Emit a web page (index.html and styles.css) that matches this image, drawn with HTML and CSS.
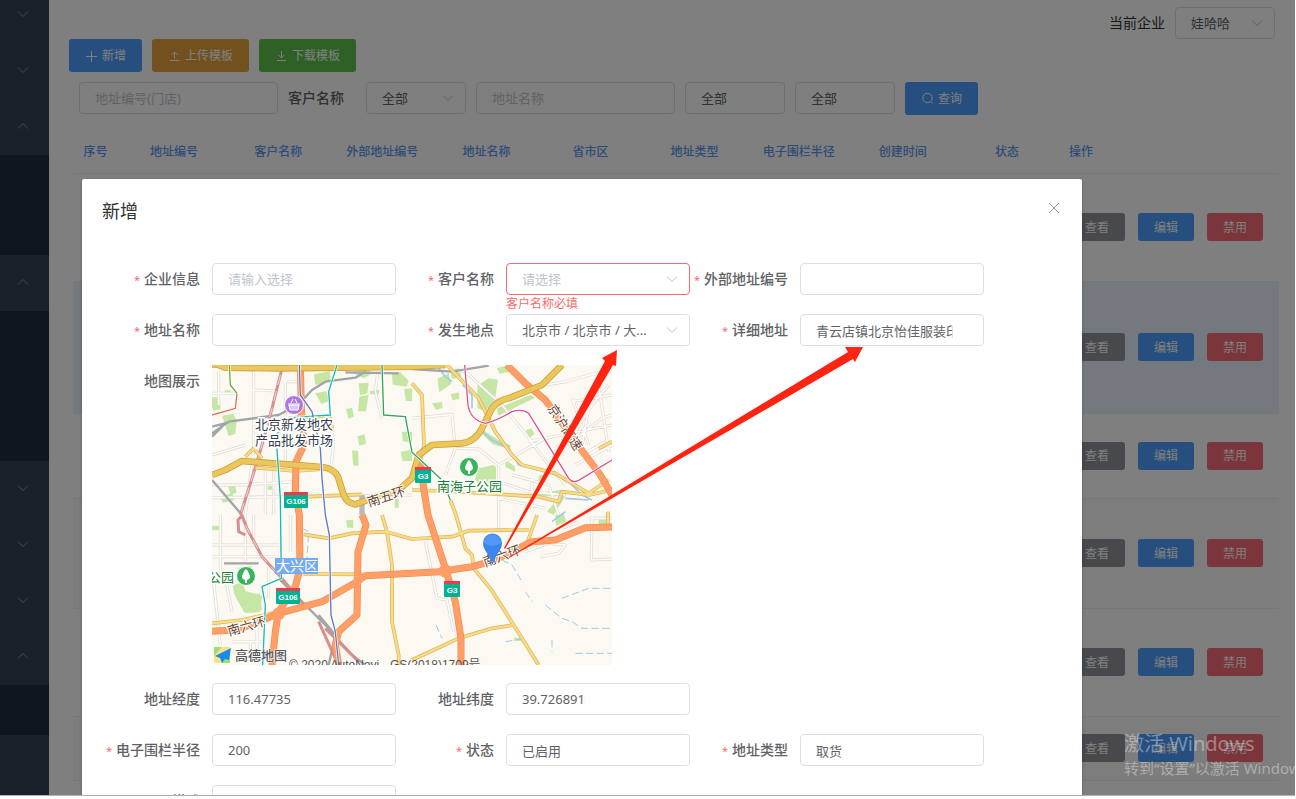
FILE: index.html
```html
<!DOCTYPE html>
<html lang="zh-CN">
<head>
<meta charset="utf-8">
<title>地址管理</title>
<link rel="stylesheet" href="styles.css">
</head>
<body>
<svg class="defs" aria-hidden="true">
  <symbol id="down" viewBox="0 0 12 12"><path d="M1 3.5 6 8.5 11 3.5"/></symbol>
  <symbol id="up" viewBox="0 0 12 12"><path d="M1 8.5 6 3.5 11 8.5"/></symbol>
</svg>
<div class="screen">
  <nav class="sidebar" aria-label="菜单">
    <button class="menu" aria-label="菜单一"><svg class="icon"><use href="#down"/></svg></button>
    <button class="menu" aria-label="菜单二"><svg class="icon"><use href="#down"/></svg></button>
    <button class="menu" aria-label="菜单三"><svg class="icon"><use href="#up"/></svg></button>
    <div class="submenu two"></div>
    <button class="menu" aria-label="菜单四"><svg class="icon"><use href="#up"/></svg></button>
    <div class="submenu three"></div>
    <button class="menu" aria-label="菜单五"><svg class="icon"><use href="#down"/></svg></button>
    <button class="menu" aria-label="菜单六"><svg class="icon"><use href="#down"/></svg></button>
    <button class="menu" aria-label="菜单七"><svg class="icon"><use href="#down"/></svg></button>
    <button class="menu" aria-label="菜单八"><svg class="icon"><use href="#up"/></svg></button>
    <div class="submenu"></div>
  </nav>

  <main class="main">
    <header class="topbar">
      <label for="company">当前企业</label>
      <span class="select small"><select id="company"><option>娃哈哈</option></select><svg class="icon"><use href="#down"/></svg></span>
    </header>
    <div class="toolbar">
      <button class="btn primary"><svg class="icon"><path d="M6.500 1V12M1 6.500H12"/></svg>新增</button>
      <button class="btn warning"><svg class="icon"><path d="M6.500 9V2M3.500 5 6.500 2 9.500 5M2 10.500H11"/></svg>上传模板</button>
      <button class="btn success"><svg class="icon"><path d="M6.500 1V8M3.500 5 6.500 8 9.500 5M2 10.500H11"/></svg>下载模板</button>
    </div>
    <div class="filters">
      <input class="field wide" placeholder="地址编号(门店)" aria-label="地址编号">
      <label class="strong" for="customer">客户名称</label>
      <span class="select small"><select id="customer"><option>全部</option></select><svg class="icon"><use href="#down"/></svg></span>
      <input class="field wide" placeholder="地址名称" aria-label="地址名称">
      <span class="select small"><select aria-label="地址类型"><option>全部</option></select></span>
      <span class="select small"><select aria-label="状态"><option>全部</option></select></span>
      <button class="btn primary"><svg class="icon"><circle cx="6.500" cy="6" r="4.700"/><path d="M9.500 9.500 11.500 11.500"/></svg>查询</button>
    </div>
    <table class="table">
      <colgroup><col class="c-index"><col><col><col><col><col><col><col><col><col><col class="c-action"></colgroup>
      <thead><tr><th class="index">序号</th><th>地址编号</th><th>客户名称</th><th>外部地址编号</th><th>地址名称</th><th>省市区</th><th>地址类型</th><th>电子围栏半径</th><th>创建时间</th><th>状态</th><th class="action">操作</th></tr></thead>
      <tbody>
        <tr class="h108"><td colspan="10"></td><td class="action"><div class="actions"><button class="btn mini info">查看</button><button class="btn mini primary">编辑</button><button class="btn mini danger">禁用</button></div></td></tr>
        <tr class="h132 current"><td colspan="10"></td><td class="action"><div class="actions"><button class="btn mini info">查看</button><button class="btn mini primary">编辑</button><button class="btn mini danger">禁用</button></div></td></tr>
        <tr class="h85"><td colspan="10"></td><td class="action"><div class="actions"><button class="btn mini info">查看</button><button class="btn mini primary">编辑</button><button class="btn mini danger">禁用</button></div></td></tr>
        <tr class="h110 stripe"><td colspan="10"></td><td class="action"><div class="actions"><button class="btn mini info">查看</button><button class="btn mini primary">编辑</button><button class="btn mini danger">禁用</button></div></td></tr>
        <tr class="h108"><td colspan="10"></td><td class="action"><div class="actions"><button class="btn mini info">查看</button><button class="btn mini primary">编辑</button><button class="btn mini danger">禁用</button></div></td></tr>
        <tr class="h64 stripe"><td colspan="10"></td><td class="action"><div class="actions"><button class="btn mini info">查看</button><button class="btn mini primary">编辑</button><button class="btn mini danger">禁用</button></div></td></tr>
      </tbody>
    </table>
  </main>

  <div class="overlay">
    <section class="dialog" role="dialog" aria-labelledby="dlg-title">
      <div class="dialog-head">
        <h1 id="dlg-title">新增</h1>
        <button class="close" aria-label="关闭"><svg class="icon"><path d="M1 1 11 11M11 1 1 11"/></svg></button>
      </div>
      <form class="form">
        <div class="row">
          <div class="item"><label class="required" for="f1">企业信息</label><input class="field" id="f1" placeholder="请输入选择"></div>
          <div class="item"><label class="required" for="f2">客户名称</label><div class="control"><span class="select invalid"><select id="f2"><option>请选择</option></select><svg class="icon"><use href="#down"/></svg></span><span class="error">客户名称必填</span></div></div>
          <div class="item"><label class="required" for="f3">外部地址编号</label><input class="field" id="f3"></div>
        </div>
        <div class="row">
          <div class="item"><label class="required" for="f4">地址名称</label><input class="field" id="f4"></div>
          <div class="item"><label class="required" for="f5">发生地点</label><span class="select"><select id="f5"><option>北京市 / 北京市 / 大...</option></select><svg class="icon"><use href="#down"/></svg></span></div>
          <div class="item"><label class="required" for="f6">详细地址</label><input class="field suffix" id="f6" value="青云店镇北京怡佳服装印刷厂"></div>
        </div>
        <div class="row map-row">
          <span class="caption">地图展示</span>
          <div class="map">
<svg class="map-svg" viewBox="0 0 400 300" role="img" aria-label="地图">
<defs>
<path id="minor" d="M20 20V120M125 10V260L100 450M0 360L90 360 240 350M0 398L600 390M160 300V450M185 300V450M220 50V300M225 50L260 50M120 75L200 78M500 0L490 80 510 160M355 180L365 230 358 300M0 85H70M0 270L100 240M600 160L720 148 730 250 700 330M732 250L800 252 860 300 1000 220M860 300V500M960 340V440M740 20L760 20 870 120 960 230M950 230L1200 180M1080 110L1200 90M1090 200L1140 120 1190 60M1080 230L1170 160 1200 150M1110 240L1130 130M1160 60L1190 260M1000 60L1060 50 1170 20M1080 100L1130 240M1050 220L1110 270 1180 230M950 220L1010 300 1060 360M1090 300L1200 240M900 330L1010 360 1040 450M860 350L950 380 1060 390M860 400L1000 430M25 450V650M0 540H200M0 575H200M5 650L25 840M100 450V590M125 450V540M235 450V560M170 600V700M60 830H160M60 860H160M115 830V890M135 760V890M640 530L675 700 705 705 725 800M0 630L40 638 60 740M1140 455L1138 585 1200 582M940 560L1010 535 1060 540 1040 565 985 575M1140 460H1200M1050 490L1100 470"/>
<path id="yellow" d="M100 275L125 250 150 280M230 160H355L362 200M130 308L250 318 340 312M600 55L630 90 636 240 625 285M705 0L800 100 850 200 900 270 930 300 1030 325 1130 385 1190 345M600 375L700 378 980 395 1040 410 1050 380 1130 390M290 395L450 388M1130 390L1200 375M1160 250L1200 230M510 450L525 500 540 600 540 770 560 870V900M275 508L350 520 420 505 520 500 600 522 720 515 770 497 950 495M975 450L940 550M1188 440V480M732 450L760 550 780 570 785 610 835 670 905 780 980 900M600 885L740 820 840 790 905 780M275 627L450 628M0 775L90 765 200 740M715 405L732 450"/>
<path id="highway" d="M265 0L268 130 276 240 252 290 250 380 262 450 264 610 250 665 200 740 190 800 180 900M0 799L70 795 130 775 200 745 330 710 435 650 460 632 600 625 680 620 780 605 835 590 900 560 960 530 1030 525 1120 488 1200 486M450 450L462 480 438 560 435 750 380 800 370 840 380 900M625 290L635 370 648 450 700 610 730 710 747 820V900M885 0L940 55 1000 105 1120 270 1165 330 1200 390"/>
<path id="ring" d="M0 -2H15L40 8 200 10 600 5 700 0M0 330L40 315 90 288 330 306Q365 310 378 335L395 390Q405 415 430 418L480 400 560 375 600 340 620 270 660 240 750 235Q790 230 810 190L840 130Q860 105 890 100L990 60 1050 0"/>
</defs>
<rect width="400" height="300" fill="#fcf9f2"/>
<g transform="scale(.333333)" fill="none" stroke-linejoin="round">
<g fill="#c5e6a5">
<path d="M38 76h18v12H38zM0 95l24 4 2 34-22 4-4-12zM30 152l34-6 10 22-4 38-20 8-14-44zM306 28l48-10 2 30-46 12zM310 85l32-6 12 28-26 10zM240 158l40-20-10 30zM418 22l46-12 18 14-26 16zM440 55l30-2-4 32-22 6zM442 95l28-6-8 50-24 0zM402 132l18-4 6 26-16 8zM474 78l28-4-2 14h-26zM540 25l24-4 26 26-6 18-42-6zM576 72l24-2v38h-18zM570 200l30 0v34l-28-6zM566 260l34-6v34h-28zM436 214l22-6 4 28-20 6zM420 256l18 2 2 44h-16zM48 362l20-4 6 24-18 8zM168 362h16l-2 12h-16zM20 395l40-10 8 20-34 8zM548 402h12v26h-12z"/>
<path d="M676 42l34-18 8 32-36 26zM714 16l28-6 6 26-28 6zM716 88l24-6 2 20-20 4zM796 62l34-22 28 4-10 66-28 28-24-8zM855 10l34-10 4 20-30 6zM855 130l100-40 14 8-110 54zM826 46l24-4v30h-24zM812 194l46 30 40 18-6 10-50-14-34-34zM941 196l18-6 8 18-16 10zM660 115l30-4 2 18-20 6zM880 284l28 20 2 16-30-14zM800 310l44-10 8 6v60l-36 4-28-24zM980 332l22-4v24h-22zM960 386l90-12 4 16-90 8zM1005 440l50-60 10 6-40 64z"/>
<path d="M402 466l22-2v24h-18zM0 482h30l-4 14H0zM80 608l40-6-4 14-36 2zM62 660l30-8 8 26 50 14-6 50-44 2-22-34-12-26zM84 688l60-2 6 50-56 4zM1030 450l24-4 10 24-32 12zM1160 458l30-6v30h-30zM840 582l20-2 2 16h-20zM906 818h22l-2 10h-20z"/></g>
<use href="#minor" stroke="#ddd8d3" stroke-width="9"/>
<use href="#minor" stroke="#fffdf9" stroke-width="5"/>
<g stroke="#9ccaf0" stroke-width="5"><path d="M680 10L700 35 720 50M752 60L780 90 780 130M800 190L840 225 890 250 920 300 1000 320 1060 340 1110 390 1140 405M1060 400L1130 405M1020 470L1060 440"/><path d="M270 490L290 500 285 580M840 582L860 580 900 600 930 650M940 680L960 710M1000 720L1050 760 1080 770 1110 790H1200M1050 700L1130 670H1200M672 780L690 820M880 830L940 820M1020 825V860M1090 865H1200" stroke-dasharray="22 10" stroke-width="3"/></g>
<path stroke="#9fa5a8" stroke-width="7" d="M0 205L50 170 200 150 260 118 300 75 340 50 430 38 460 20M0 215L40 175M0 185L50 172M400 22L560 25M0 345L90 450M600 12L720 20 830 2M36 595H140M200 640L270 710 340 780 420 870 460 900M320 750L370 810 350 900"/>
<path d="M450 390V450" stroke="#b9b9b9" stroke-width="16"/>
<g stroke="#d58f8f" stroke-width="9"><path d="M210 10L180 130 150 240 120 340 85 450M100 510L80 500 78 465 90 452 105 490 150 575 210 640 280 725M320 770L370 880M340 790L440 890"/><path d="M205 30L180 130 150 240 120 340 88 440M100 480L150 575 200 630" stroke="#f3d7d5" stroke-width="3" stroke-dasharray="30 20"/></g>
<use href="#yellow" stroke="#dfb052" stroke-width="11"/>
<use href="#yellow" stroke="#f6dc88" stroke-width="7"/>
<use href="#highway" stroke="#f08c52" stroke-width="21"/>
<use href="#highway" stroke="#ff9e66" stroke-width="17"/>
<circle cx="700" cy="618" r="20" fill="#ff9e66"/><circle cx="200" cy="746" r="19" fill="#ff9e66"/><circle cx="440" cy="642" r="15" fill="#ff9e66"/>
<use href="#ring" stroke="#cda034" stroke-width="20"/>
<use href="#ring" stroke="#eac65c" stroke-width="15"/>
<path stroke="#fff" stroke-width="8" d="M375 0L350 80 355 150 240 158 192 210 205 400 208 640 150 665 160 720 152 900M262 0L265 90 300 140 325 250 330 340 340 450 352 510 357 750 370 800 380 900M510 0L515 150 580 155 600 262M600 262L690 345 715 405M758 0L768 120Q775 165 820 175 850 170 900 140 930 130 950 145L1070 340Q1085 360 1110 340L1200 285M52 0L55 60 75 85 70 130 0 150"/>
<g stroke-width="4"><path stroke="#17b8ad" d="M375 0L350 80 355 150 240 158 192 210 205 400 208 640 150 665 160 720 152 900"/><path stroke="#6179bd" d="M262 0L265 90 300 140 325 250 330 340 340 450 352 510 357 750 370 800 380 900"/><path stroke="#37a45c" d="M510 0L515 150 580 155 600 262L690 345 715 405"/><path stroke="#d9558e" d="M758 0L768 120Q775 165 820 175 850 170 900 140 930 130 950 145L1070 340Q1085 360 1110 340L1200 285"/><path stroke="#71a83e" d="M52 0L55 60 75 85"/><path stroke="#dc7650" d="M75 85L70 130 0 150"/></g>
</g>
<circle cx="82" cy="40" r="9.500" fill="#ad77e2" stroke="#fff"/><path d="M77 40h10l-1 5h-8zM76 39h12M79 38l2-4M85 38l-2-4" fill="#d9c2f4" stroke="#fff" stroke-width="1"/>
<g id="tree"><circle cx="257" cy="102" r="9.500" fill="#39b45c" stroke="#fff"/><path d="M257 95q2 1 3 5 3 4-2 6v3h-2v-3q-5-2-2-6 1-4 3-5" fill="#fff"/></g>
<use href="#tree" x="-223" y="109"/>
<g fill="#00b294"><rect x="72" y="127" width="24" height="16" rx="1"/><rect x="64" y="223" width="24" height="16" rx="1"/><rect x="203" y="102" width="16" height="16" rx="1"/><rect x="232" y="216" width="16" height="16" rx="1"/></g>
<path d="M72 127h24v3H72zM64 223h24v3H64zM203 102h16v3h-16zM232 216h16v3h-16z" fill="#e83c4b"/>
<g class="shield"><text x="84" y="139">G106</text><text x="76" y="235">G106</text><text x="211" y="114">G3</text><text x="240" y="228">G3</text></g>
<rect x="63" y="193" width="43" height="16" fill="#76aaf1"/>
<text class="district" x="64" y="206">大兴区</text>
<g class="place"><text x="43" y="64">北京新发地农</text><text x="43" y="80">产品批发市场</text></g>
<g class="place park"><text x="225" y="126">南海子公园</text><text x="-4" y="217">公园</text></g>
<g class="road"><text transform="translate(157 142) rotate(-18)">南五环</text><text transform="translate(17 271) rotate(-16)">南六环</text><text transform="translate(273 202) rotate(-20)">南六环</text><text transform="translate(335 43) rotate(57)">京沪高速</text></g>
<path d="M271 178a9.500 9.500 0 0 1 19 0q0 5-4.500 11-4 6-5 11-1-5-5-11-4.500-6-4.500-11" fill="#3a86ee"/><path d="M272 178a8.500 8.500 0 0 1 17 0q-8 6-17 0" fill="#5497f4"/>
<path d="M2 282h16v16H2z" fill="#fae388"/><path d="M2 282h8L2 291zM10 290l8-6v14h-8z" fill="#9edb79"/><path d="M19 283L3 291l5 2 2 5 3-4 4 1z" fill="#198bf0"/>
<text class="brand" x="23" y="295">高德地图</text>
<text class="copyright" x="77" y="304">© 2020 AutoNavi - GS(2018)1709号</text>
</svg>
<svg class="arrows" viewBox="0 0 400 300" aria-hidden="true"><path d="M292 183 393-4 390-7 405-15 404 1 401 0 293 184zM297 192 636-13 633-18H651L643-3 641-6 297 193z"/></svg>
          </div>
        </div>
        <div class="row">
          <div class="item"><label for="f7">地址经度</label><input class="field" id="f7" value="116.47735"></div>
          <div class="item"><label for="f8">地址纬度</label><input class="field" id="f8" value="39.726891"></div>
        </div>
        <div class="row">
          <div class="item"><label class="required" for="f9">电子围栏半径</label><input class="field" id="f9" value="200"></div>
          <div class="item"><label class="required" for="f10">状态</label><input class="field" id="f10" value="已启用"></div>
          <div class="item"><label class="required" for="f11">地址类型</label><input class="field" id="f11" value="取货"></div>
        </div>
        <div class="row">
          <div class="item"><label for="f12">描述</label><input class="field" id="f12"></div>
        </div>
      </form>
    </section>
  </div>
  <div class="watermark"><p class="wm-title">激活 Windows</p><p>转到“设置”以激活 Windows。</p></div>
</div>
</body>
</html>
```
FILE: styles.css
```css
* { box-sizing: border-box; }
body {
  margin: 0;
  background: #fdfdfd;
  color: #303133;
  font: 14px/20px "Noto Sans", "Noto Sans CJK SC", sans-serif;
  overflow: hidden;
}
button, input, select { font: inherit; }
button { border: 0; padding: 0; cursor: pointer; }
.defs { display: none; }
.icon {
  width: 12px;
  height: 12px;
  fill: none;
  stroke: currentColor;
  stroke-width: 1;
  flex: none;
}
.screen {
  position: relative;
  display: flex;
  height: calc(100vh - 3px);
  margin-right: 1px;
  border-bottom: 1px solid #b0b0b0;
  background: #fff;
  overflow: hidden;
}

/* Sidebar */
.sidebar {
  flex: none;
  display: flex;
  flex-direction: column;
  width: 49px;
  margin-top: -13px;
  background: #344355;
}
.menu {
  flex: none;
  height: 56px;
  padding-right: 3px;
  background: none;
  color: #909399;
}
.submenu { flex: none; height: 50px; background: #1f2d3d; }
.submenu.two { height: 100px; }
.submenu.three { height: 150px; }

/* Page */
.main { flex: 1; min-width: 0; }
.topbar {
  display: flex;
  justify-content: flex-end;
  align-items: center;
  gap: 10px;
  padding: 7px 20px 0 0;
}
.toolbar { display: flex; gap: 10px; padding-left: 20px; }
.filters {
  display: flex;
  align-items: center;
  gap: 10px;
  height: 32px;
  margin: 10px 0 0 30px;
}
.strong { font-weight: 500; margin-right: 12px; color: #606266; }
.btn {
  display: flex;
  align-items: center;
  gap: 4px;
  height: 33px;
  padding: 1px 16px 0;
  border-radius: 3px;
  color: #fff;
  font-size: 12px;
  white-space: nowrap;
}
.btn .icon { width: 13px; height: 13px; }
.primary { background: #4c9eff; }
.warning { background: #e6a23c; }
.success { background: #5fc24c; }
.info { background: #909399; }
.danger { background: #f56c74; }
.btn.mini { height: 28px; }

.field, .select {
  width: 184px;
  height: 32px;
  border: 1px solid #dcdfe6;
  border-radius: 4px;
  background: #fff;
  color: #606266;
  font-size: 13px;
}
.field { padding: 0 15px; outline: 0; }
.field.wide { width: 199px; }
.field.suffix { padding-right: 30px; }
.field::placeholder { color: #c0c4cc; }
.select { display: grid; align-items: center; }
.select.small { width: 100px; }
.select select {
  grid-area: 1 / 1;
  width: 100%;
  height: 30px;
  padding: 0 30px 0 15px;
  border: 0;
  appearance: none;
  background: none;
  color: inherit;
}
.select .icon {
  grid-area: 1 / 1;
  justify-self: end;
  margin-right: 11px;
  color: #c0c4cc;
  pointer-events: none;
}
.select.invalid { border-color: #f56c6c; color: #c0c4cc; }

.table {
  width: calc(100% - 40px);
  margin: 18px 0 0 24px;
  border-collapse: collapse;
  table-layout: fixed;
  font-size: 12px;
}
.c-index { width: 49px; }
.c-action { width: 220px; }
.table th {
  height: 41px;
  padding: 0;
  color: #5c96f0;
  font-weight: 500;
}
.table .index { padding-right: 4px; }
.table tr { border-bottom: 1px solid #ebeef5; }
.table td { padding: 0; }
.table .action { padding-left: 10px; text-align: left; }
.actions { display: flex; gap: 13px; }
.h64 { height: 64px; }
.h85 { height: 85px; }
.h108 { height: 108px; }
.h110 { height: 110px; }
.h132 { height: 132px; }
.current { background: #e6f3fd; }
.stripe { background: #fafafa; }

/* Dialog */
.overlay {
  position: absolute;
  inset: 0;
  padding: 179px 20px 0 82px;
  background: rgba(0, 0, 0, .5);
}
.dialog {
  max-width: 1000px;
  padding: 20px 20px 40px;
  border-radius: 2px;
  background: #fff;
  box-shadow: 0 1px 3px rgba(0, 0, 0, .3);
}
.dialog-head {
  display: flex;
  justify-content: space-between;
  height: 64px;
}
h1 { margin: 0; font-size: 18px; line-height: 24px; font-weight: 400; }
.close { height: 18px; margin-right: 2px; background: none; color: #909399; }
.row { display: flex; margin-bottom: 19px; }
.item { display: flex; }
.item label, .caption {
  flex: none;
  width: 110px;
  padding-right: 12px;
  color: #606266;
  font-weight: 500;
  line-height: 32px;
  text-align: right;
  white-space: nowrap;
}
.required::before {
  content: "*";
  margin-right: 4px;
  color: #f56c6c;
  font-size: 11px;
  font-weight: 400;
  line-height: 1;
}
.control { height: 32px; }
.error { display: block; color: #f56c6c; font-size: 12px; line-height: 18px; }

/* Map */
.map-row { margin-bottom: 18px; }
.map { position: relative; width: 400px; }
.map-svg { display: block; width: 100%; }
.arrows {
  position: absolute;
  inset: 0;
  overflow: visible;
  fill: #ff2312;
  pointer-events: none;
}
.map text { font-family: "Noto Sans CJK SC", sans-serif; }
.shield { fill: #fff; font-size: 8px; font-weight: 700; text-anchor: middle; }
.map .shield text { font-family: "Liberation Sans", sans-serif; }
.district { fill: #fff; font-size: 14px; }
.place { fill: #333c4d; font-size: 13px; stroke: #fff; stroke-width: 3px; paint-order: stroke; }
.park { fill: #188034; }
.road { fill: #6b4a35; font-size: 13px; stroke: #fff; stroke-width: 2px; paint-order: stroke; }
.brand { fill: #555; font-size: 13px; font-weight: 500; stroke: #fff; stroke-width: 1px; paint-order: stroke; }
.map .copyright { fill: #555; font: 12px "Liberation Sans", "Noto Sans CJK SC", sans-serif; }

/* Watermark */
.watermark {
  position: absolute;
  left: calc(100% - 171px);
  bottom: 17px;
  color: rgba(255, 255, 255, .38);
  font-size: 15px;
  line-height: 20px;
  white-space: nowrap;
  pointer-events: none;
}
.watermark p { margin: 0; }
.watermark .wm-title { font-size: 20px; line-height: 28px; }
```
